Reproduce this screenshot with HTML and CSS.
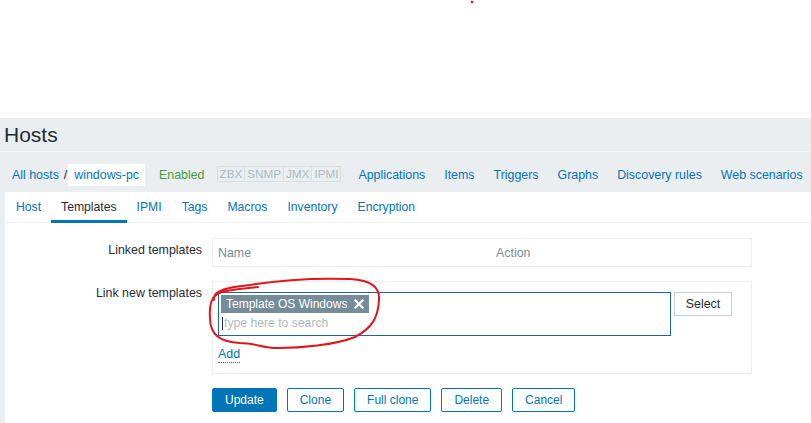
FILE: index.html
```html
<!DOCTYPE html>
<html>
<head>
<meta charset="utf-8">
<title>Hosts</title>
<link rel="stylesheet" href="styles.css">
</head>
<body>
<div class="top-space"></div>
<main class="page">
  <header class="header"><h1 class="title">Hosts</h1></header>
  <nav class="crumbs">
    <a class="crumb-link">All hosts</a>
    <span class="crumb-sep">/</span>
    <a class="crumb-current">windows-pc</a>
    <span class="status-enabled">Enabled</span>
    <span class="avail">
      <span class="avail-item">ZBX</span><span class="avail-item">SNMP</span><span class="avail-item">JMX</span><span class="avail-item">IPMI</span>
    </span>
    <a class="nav-link first">Applications</a>
    <a class="nav-link">Items</a>
    <a class="nav-link">Triggers</a>
    <a class="nav-link">Graphs</a>
    <a class="nav-link">Discovery rules</a>
    <a class="nav-link">Web scenarios</a>
  </nav>
  <section class="content">
    <ul class="tabs">
      <li class="tab">Host</li>
      <li class="tab active">Templates</li>
      <li class="tab">IPMI</li>
      <li class="tab">Tags</li>
      <li class="tab">Macros</li>
      <li class="tab">Inventory</li>
      <li class="tab">Encryption</li>
    </ul>
    <div class="form">
      <div class="row">
        <label class="label">Linked templates</label>
        <div class="table-box">
          <span class="th th-name">Name</span>
          <span class="th">Action</span>
        </div>
      </div>
      <div class="row">
        <label class="label">Link new templates</label>
        <div class="link-box">
          <div class="ms-line">
            <div class="multiselect">
              <span class="tag">Template OS Windows<span class="tag-x">
                <svg width="10" height="10" viewBox="0 0 10 10"><path d="M1.5 1.5 L8.5 8.5 M8.5 1.5 L1.5 8.5" stroke="#fff" stroke-width="2.2" stroke-linecap="square"/></svg>
              </span></span>
              <div class="ms-input"><span class="caret"></span>type here to search</div>
            </div>
            <button class="btn-grey">Select</button>
          </div>
          <a class="add-link">Add</a>
        </div>
      </div>
      <div class="buttons">
        <button class="btn primary">Update</button>
        <button class="btn">Clone</button>
        <button class="btn">Full clone</button>
        <button class="btn">Delete</button>
        <button class="btn">Cancel</button>
      </div>
    </div>
  </section>
</main>
<svg class="annotation" width="811" height="423" viewBox="0 0 811 423">
  <circle cx="472" cy="2" r="1.3" fill="#e0161b"/>
  <path d="M 214 300 C 212 290, 230 287, 250 285 C 280 280, 320 278, 350 279 C 372 280, 380 288, 379 300 C 378 318, 372 328, 355 337 C 335 345, 300 348, 278 348 C 262 348, 255 343, 240 343 C 220 342, 210 335, 210 318 C 209 305, 211 295, 222 292 C 235 289, 245 288, 258 287" fill="none" stroke="#e0161b" stroke-width="2" stroke-linecap="round"/>
</svg>
</body>
</html>
```
FILE: styles.css
```css
html, body {
  margin: 0;
  padding: 0;
  height: 100%;
  overflow: hidden;
}
body {
  background: #fff;
  font-family: "Liberation Sans", Arial, sans-serif;
  font-size: 12.4px;
  color: #1f2c33;
  display: flex;
  flex-direction: column;
  position: relative;
}
a { color: #0275b8; text-decoration: none; }

.top-space { height: 118px; flex: none; }

.page {
  flex: 1;
  background: #ebeef0;
  display: flex;
  flex-direction: column;
}

.header {
  height: 33px;
  border-bottom: 1px solid #f4f5f6;
}
.title {
  margin: 0;
  padding-left: 4px;
  font-size: 21px;
  font-weight: normal;
  line-height: 33px;
  color: #1f2c33;
}

.crumbs {
  height: 40px;
  box-sizing: border-box;
  padding-top: 12px;
  display: flex;
  align-items: flex-start;
  line-height: 22px;
}
.crumb-link { margin-left: 12px; }
.crumb-sep { margin-left: 5px; margin-right: 1px; color: #1f2c33; }
.crumb-current {
  background: #fff;
  padding: 0 6px;
  height: 22px;
}
.status-enabled { color: #429e47; margin-left: 14px; }
.avail {
  margin-left: 12px;
  margin-top: 2px;
  display: flex;
  border: 1px solid #d9dee1;
  line-height: 14px;
  font-size: 11.7px;
  color: #acbbc2;
}
.avail-item { padding: 0 2px; border-left: 1px solid #d9dee1; }
.avail-item:first-child { border-left: none; }
.nav-link { margin-left: 19px; }
.nav-link.first { margin-left: 17px; }

.content {
  flex: 1;
  background: #fff;
  margin-left: 5px;
}

.tabs {
  list-style: none;
  margin: 0;
  padding: 0 0 0 1px;
  display: flex;
  height: 30px;
  border-bottom: 1px solid #ebeef0;
  font-size: 12.2px;
}
.tab {
  padding: 0 10px;
  line-height: 30px;
  height: 31px;
  color: #0275b8;
  box-sizing: border-box;
}
.tab.active {
  color: #1f2c33;
  box-shadow: inset 0 -3px 0 #0275b8;
  position: relative;
  z-index: 1;
}

.form {
  padding-top: 15px;
  display: flex;
  flex-direction: column;
  gap: 14px;
}
.row {
  display: flex;
  align-items: flex-start;
}
.label {
  width: 197px;
  flex: none;
  text-align: right;
  line-height: 24px;
  margin-right: 10px;
  color: #1f2c33;
}

.table-box {
  width: 540px;
  height: 29px;
  box-sizing: border-box;
  border: 1px solid #ebeef0;
  display: flex;
  align-items: center;
  color: #768d99;
}
.th { padding-left: 5px; }
.th-name { width: 273px; }

.link-box {
  width: 540px;
  box-sizing: border-box;
  border: 1px solid #ebeef0;
  padding: 10px 5px 10px 5px;
}
.ms-line { display: flex; align-items: flex-start; }
.multiselect {
  width: 453px;
  height: 44px;
  box-sizing: border-box;
  border: 1px solid #1f65a6;
  padding: 2px;
}
.tag {
  display: inline-flex;
  align-items: center;
  height: 18px;
  background: #768d99;
  color: #fff;
  padding: 0 4px 0 5px;
  line-height: 18px;
  font-size: 12px;
}
.tag-x {
  display: inline-flex;
  margin-left: 6px;
  width: 12px;
  justify-content: center;
}
.ms-input {
  margin-top: 1px;
  line-height: 18px;
  padding-left: 1px;
  color: #acbbc2;
  font-size: 12.2px;
  display: flex;
  align-items: center;
}
.caret {
  width: 1px;
  height: 13px;
  background: #1f2c33;
  margin-right: 1px;
}
.btn-grey {
  margin-left: 3px;
  height: 24px;
  width: 58px;
  border: 1px solid #c9d0d4;
  background: #fff;
  color: #1f2c33;
  font-family: inherit;
  font-size: 12.4px;
  padding: 0;
}
.add-link {
  display: inline-block;
  margin-top: 10px;
  line-height: 16px;
  border-bottom: 1px dotted #0275b8;
}

.buttons {
  display: flex;
  gap: 10px;
  margin-left: 207px;
}
.btn {
  height: 24px;
  padding: 0 12px;
  border: 1px solid #0275b8;
  background: #fff;
  color: #0275b8;
  font-family: inherit;
  font-size: 12px;
  border-radius: 2px;
}
.btn.primary {
  background: #0275b8;
  color: #fff;
}

.annotation {
  position: absolute;
  left: 0;
  top: 0;
  pointer-events: none;
}
```
